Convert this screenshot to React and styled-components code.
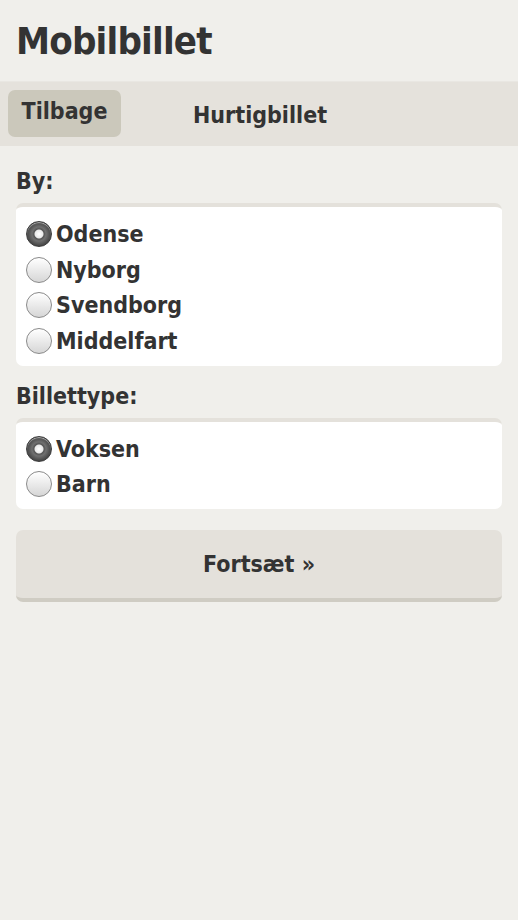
import React, { useState } from 'react';
import styled, { createGlobalStyle } from 'styled-components';

const GlobalStyle = createGlobalStyle`
  body {
    margin: 0;
    background: #f0efeb;
    font-family: 'DejaVu Sans Condensed', 'DejaVu Sans', sans-serif;
    color: #333333;
  }
`;

const cities = ['Odense', 'Nyborg', 'Svendborg', 'Middelfart'];
const types = ['Voksen', 'Barn'];

const App = () => {
  const [city, setCity] = useState('Odense');
  const [type, setType] = useState('Voksen');

  return (
    <Page>
      <GlobalStyle />
      <Title>Mobilbillet</Title>
      <NavBar>
        <BackButton type='button'>Tilbage</BackButton>
        <NavTitle>Hurtigbillet</NavTitle>
      </NavBar>
      <Content>
        <Label>By:</Label>
        <Box>
          {cities.map((c) => (
            <Option key={c} onClick={() => setCity(c)}>
              <Radio checked={city === c} />
              {c}
            </Option>
          ))}
        </Box>
        <Label>Billettype:</Label>
        <Box>
          {types.map((t) => (
            <Option key={t} onClick={() => setType(t)}>
              <Radio checked={type === t} />
              {t}
            </Option>
          ))}
        </Box>
        <NextButton type='button'>Fortsæt »</NextButton>
      </Content>
    </Page>
  );
};

const Page = styled.div`
  min-height: 920px;
`;

const Title = styled.h1`
  margin: 0;
  height: 81px;
  padding: 0 16px;
  display: flex;
  align-items: center;
  font-size: 38px;
  font-weight: bold;
  letter-spacing: -0.8px;
`;

const NavBar = styled.div`
  height: 65px;
  background: #e5e2dc;
  border-top: 1px solid #e9e7e2;
  display: flex;
  align-items: flex-start;
  padding: 8px;
  box-sizing: border-box;
`;

const BackButton = styled.button`
  width: 113px;
  height: 47px;
  border: none;
  border-radius: 7px;
  background: #cbc8bb;
  color: #333333;
  font-family: inherit;
  font-size: 23px;
  font-weight: bold;
  padding: 0 0 6px;
`;

const NavTitle = styled.div`
  margin-left: 72px;
  line-height: 47px;
  padding-top: 2px;
  font-size: 23px;
  font-weight: bold;
`;

const Content = styled.div`
  padding: 16px 16px;
  display: flex;
  flex-direction: column;
`;

const Label = styled.div`
  font-size: 23px;
  font-weight: bold;
  line-height: 38px;
  margin-bottom: 3px;
`;

const Box = styled.div`
  background: #ffffff;
  border-top: 4px solid #e4e1db;
  border-radius: 7px;
  padding: 9px 10px 7px;
  margin-bottom: 11px;
`;

const Option = styled.label`
  display: flex;
  align-items: center;
  height: 35.7px;
  font-size: 23px;
  font-weight: bold;
  cursor: pointer;
`;

const Radio = styled.span`
  width: 26px;
  height: 26px;
  border-radius: 50%;
  box-sizing: border-box;
  margin-right: 4px;
  flex-shrink: 0;
  border: 1px solid ${(p) => (p.checked ? '#3a3a3a' : '#8a8a8a')};
  background: ${(p) =>
    p.checked
      ? 'radial-gradient(circle at 50% 50%, #ffffff 0, #e8e8e8 4px, #555 5px, #707070 7px, #444 12px)'
      : 'linear-gradient(#ffffff, #d6d6d6)'};
  box-shadow: inset 0 1px 1px rgba(255, 255, 255, 0.6);
`;

const NextButton = styled.button`
  margin-top: 10px;
  height: 72px;
  border: none;
  border-bottom: 4px solid #cfccc3;
  border-radius: 7px;
  background: #e4e1db;
  color: #333333;
  font-family: inherit;
  font-size: 23px;
  font-weight: bold;
`;

export default App;
